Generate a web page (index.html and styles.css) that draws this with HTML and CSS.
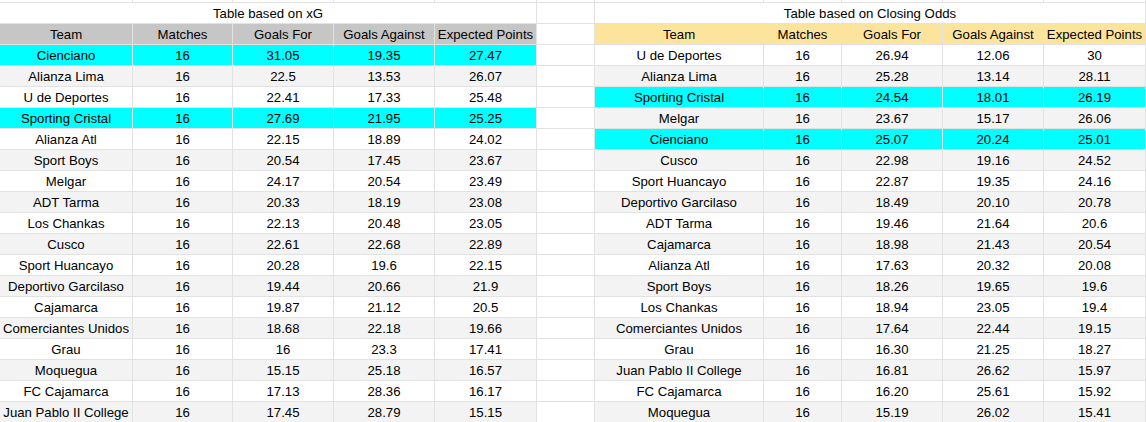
FILE: index.html
```html
<!DOCTYPE html>
<html lang="en">
<head>
<meta charset="utf-8">
<title>Tables</title>
<link rel="stylesheet" href="styles.css">
</head>
<body>
<div class="sheet">
  <!-- partial top row -->
  <div class="c top"></div><div class="c top"></div><div class="c top"></div><div class="c top"></div><div class="c top"></div><div class="c top"></div><div class="c top"></div><div class="c top"></div><div class="c top"></div><div class="c top"></div><div class="c top"></div>

  <!-- titles -->
  <div class="c title left-span">Table based on xG</div>
  <div class="c"></div>
  <div class="c title right-span">Table based on Closing Odds</div>

  <!-- headers -->
  <div class="c hl">Team</div><div class="c hl">Matches</div><div class="c hl">Goals For</div><div class="c hl">Goals Against</div><div class="c hl">Expected Points</div>
  <div class="c"></div>
  <div class="c hr">Team</div><div class="c hr">Matches</div><div class="c hr">Goals For</div><div class="c hr">Goals Against</div><div class="c hr">Expected Points</div>

  <!-- 1 -->
  <div class="c cy">Cienciano</div><div class="c cy">16</div><div class="c cy">31.05</div><div class="c cy">19.35</div><div class="c cy">27.47</div>
  <div class="c"></div>
  <div class="c">U de Deportes</div><div class="c">16</div><div class="c">26.94</div><div class="c">12.06</div><div class="c">30</div>
  <!-- 2 -->
  <div class="c g">Alianza Lima</div><div class="c g">16</div><div class="c g">22.5</div><div class="c g">13.53</div><div class="c g">26.07</div>
  <div class="c"></div>
  <div class="c g">Alianza Lima</div><div class="c g">16</div><div class="c g">25.28</div><div class="c g">13.14</div><div class="c g">28.11</div>
  <!-- 3 -->
  <div class="c">U de Deportes</div><div class="c">16</div><div class="c">22.41</div><div class="c">17.33</div><div class="c">25.48</div>
  <div class="c"></div>
  <div class="c cy">Sporting Cristal</div><div class="c cy">16</div><div class="c cy">24.54</div><div class="c cy">18.01</div><div class="c cy">26.19</div>
  <!-- 4 -->
  <div class="c cy">Sporting Cristal</div><div class="c cy">16</div><div class="c cy">27.69</div><div class="c cy">21.95</div><div class="c cy">25.25</div>
  <div class="c"></div>
  <div class="c g">Melgar</div><div class="c g">16</div><div class="c g">23.67</div><div class="c g">15.17</div><div class="c g">26.06</div>
  <!-- 5 -->
  <div class="c">Alianza Atl</div><div class="c">16</div><div class="c">22.15</div><div class="c">18.89</div><div class="c">24.02</div>
  <div class="c"></div>
  <div class="c cy">Cienciano</div><div class="c cy">16</div><div class="c cy">25.07</div><div class="c cy">20.24</div><div class="c cy">25.01</div>
  <!-- 6 -->
  <div class="c g">Sport Boys</div><div class="c g">16</div><div class="c g">20.54</div><div class="c g">17.45</div><div class="c g">23.67</div>
  <div class="c"></div>
  <div class="c g">Cusco</div><div class="c g">16</div><div class="c g">22.98</div><div class="c g">19.16</div><div class="c g">24.52</div>
  <!-- 7 -->
  <div class="c">Melgar</div><div class="c">16</div><div class="c">24.17</div><div class="c">20.54</div><div class="c">23.49</div>
  <div class="c"></div>
  <div class="c">Sport Huancayo</div><div class="c">16</div><div class="c">22.87</div><div class="c">19.35</div><div class="c">24.16</div>
  <!-- 8 -->
  <div class="c g">ADT Tarma</div><div class="c g">16</div><div class="c g">20.33</div><div class="c g">18.19</div><div class="c g">23.08</div>
  <div class="c"></div>
  <div class="c g">Deportivo Garcilaso</div><div class="c g">16</div><div class="c g">18.49</div><div class="c g">20.10</div><div class="c g">20.78</div>
  <!-- 9 -->
  <div class="c">Los Chankas</div><div class="c">16</div><div class="c">22.13</div><div class="c">20.48</div><div class="c">23.05</div>
  <div class="c"></div>
  <div class="c">ADT Tarma</div><div class="c">16</div><div class="c">19.46</div><div class="c">21.64</div><div class="c">20.6</div>
  <!-- 10 -->
  <div class="c g">Cusco</div><div class="c g">16</div><div class="c g">22.61</div><div class="c g">22.68</div><div class="c g">22.89</div>
  <div class="c"></div>
  <div class="c g">Cajamarca</div><div class="c g">16</div><div class="c g">18.98</div><div class="c g">21.43</div><div class="c g">20.54</div>
  <!-- 11 -->
  <div class="c">Sport Huancayo</div><div class="c">16</div><div class="c">20.28</div><div class="c">19.6</div><div class="c">22.15</div>
  <div class="c"></div>
  <div class="c">Alianza Atl</div><div class="c">16</div><div class="c">17.63</div><div class="c">20.32</div><div class="c">20.08</div>
  <!-- 12 -->
  <div class="c g">Deportivo Garcilaso</div><div class="c g">16</div><div class="c g">19.44</div><div class="c g">20.66</div><div class="c g">21.9</div>
  <div class="c"></div>
  <div class="c g">Sport Boys</div><div class="c g">16</div><div class="c g">18.26</div><div class="c g">19.65</div><div class="c g">19.6</div>
  <!-- 13 -->
  <div class="c">Cajamarca</div><div class="c">16</div><div class="c">19.87</div><div class="c">21.12</div><div class="c">20.5</div>
  <div class="c"></div>
  <div class="c">Los Chankas</div><div class="c">16</div><div class="c">18.94</div><div class="c">23.05</div><div class="c">19.4</div>
  <!-- 14 -->
  <div class="c g">Comerciantes Unidos</div><div class="c g">16</div><div class="c g">18.68</div><div class="c g">22.18</div><div class="c g">19.66</div>
  <div class="c"></div>
  <div class="c g">Comerciantes Unidos</div><div class="c g">16</div><div class="c g">17.64</div><div class="c g">22.44</div><div class="c g">19.15</div>
  <!-- 15 -->
  <div class="c">Grau</div><div class="c">16</div><div class="c">16</div><div class="c">23.3</div><div class="c">17.41</div>
  <div class="c"></div>
  <div class="c">Grau</div><div class="c">16</div><div class="c">16.30</div><div class="c">21.25</div><div class="c">18.27</div>
  <!-- 16 -->
  <div class="c g">Moquegua</div><div class="c g">16</div><div class="c g">15.15</div><div class="c g">25.18</div><div class="c g">16.57</div>
  <div class="c"></div>
  <div class="c g">Juan Pablo II College</div><div class="c g">16</div><div class="c g">16.81</div><div class="c g">26.62</div><div class="c g">15.97</div>
  <!-- 17 -->
  <div class="c">FC Cajamarca</div><div class="c">16</div><div class="c">17.13</div><div class="c">28.36</div><div class="c">16.17</div>
  <div class="c"></div>
  <div class="c">FC Cajamarca</div><div class="c">16</div><div class="c">16.20</div><div class="c">25.61</div><div class="c">15.92</div>
  <!-- 18 -->
  <div class="c g">Juan Pablo II College</div><div class="c g">16</div><div class="c g">17.45</div><div class="c g">28.79</div><div class="c g">15.15</div>
  <div class="c"></div>
  <div class="c g">Moquegua</div><div class="c g">16</div><div class="c g">15.19</div><div class="c g">26.02</div><div class="c g">15.41</div>
</div>
</body>
</html>
```

FILE: styles.css
```css
html, body {
  margin: 0;
  padding: 0;
  background: #ffffff;
  overflow: hidden;
}

.sheet {
  display: grid;
  grid-template-columns: 133px 100px 101px 101px 102px 58px 169px 78px 101px 101px 1fr;
  grid-template-rows: 3px repeat(20, 21px);
  width: 1146px;
  font-family: "Liberation Sans", Arial, sans-serif;
  font-size: 13.2px;
  color: #000000;
}

.c {
  box-sizing: border-box;
  border-right: 1px solid #e2e2e2;
  border-bottom: 1px solid #e2e2e2;
  text-align: center;
  line-height: 21px;
  white-space: nowrap;
  overflow: hidden;
  background: #ffffff;
}

.top {
  line-height: 0;
}

.left-span {
  grid-column: 1 / 6;
}

.right-span {
  grid-column: 7 / 12;
}

.g {
  background: #f3f3f3;
}

.cy {
  background: #00ffff;
}

.hl {
  background: #c6c6c6;
}

.hr {
  background: #fde49c;
}
```
